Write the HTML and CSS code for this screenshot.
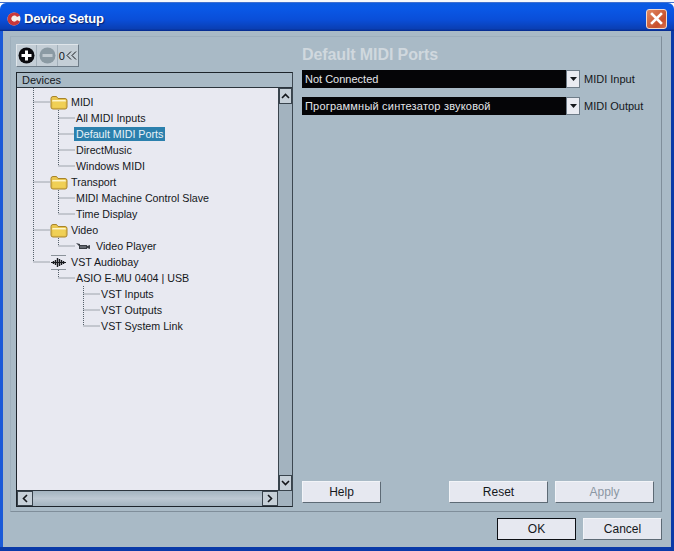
FILE: index.html
```html
<!DOCTYPE html>
<html lang="en">
<head>
<meta charset="utf-8">
<title>Device Setup</title>
<link rel="stylesheet" href="styles.css">
</head>
<body>
<div class="window">
  <div class="desktop-strip"></div>
  <header class="titlebar">
    <svg class="app-icon" width="15" height="16" viewBox="0 0 15 16"><circle cx="8" cy="8" r="6.5" fill="#f4efe9"/><path d="M8 1.500a6.500 6.500 0 1 0 6 9l-3-1.500a3 3 0 1 1 0-3l3-1.500a6.500 6.500 0 0 0-6-3z" fill="#c8373a"/><circle cx="8" cy="8" r="2.400" fill="#f4efe9"/></svg>
    <span class="title-text">Device Setup</span>
    <button class="close-btn"><svg width="13" height="13" viewBox="0 0 13 13"><path d="M2 2l9 9M11 2l-9 9" stroke="#fff" stroke-width="2.600" stroke-linecap="square"/></svg></button>
  </header>
  <div class="client">
    <div class="frame">
      <aside class="left">
        <div class="toolbar">
          <div class="tool"><svg width="17" height="17" viewBox="0 0 17 17"><circle cx="8.500" cy="8.500" r="8" fill="#0a0a0e"/><path d="M8.500 3.500v10M3.500 8.500h10" stroke="#fff" stroke-width="3"/></svg></div>
          <div class="tool"><svg width="17" height="17" viewBox="0 0 17 17"><circle cx="8.500" cy="8.500" r="8" fill="#8b9aa3"/><path d="M3.500 8.500h10" stroke="#c0c9cf" stroke-width="3"/></svg></div>
          <div class="tool tool-text">0<svg class="chevrons" width="11" height="9" viewBox="0 0 11 9"><path d="M5 .5L1 4.500 5 8.500M10 .5L6 4.500l4 4" fill="none" stroke="#14171b"/></svg></div>
        </div>
        <div class="devices">
          <div class="devices-head">Devices</div>
          <div class="devices-body">
            <div class="tree">
              <svg class="guides" width="261" height="403" viewBox="0 0 261 403"><path d="M16.500 0V174M16.500 14H33M16.500 94H33M16.500 142H33M16.500 174H33M41.500 22V78M41.500 30H58M41.500 46H58M41.500 62H58M41.500 78H58M41.500 102V126M41.500 110H58M41.500 126H58M41.500 150V158M41.500 158H58M41.500 182V190M41.500 190H58M66.500 198V238M66.500 206H83M66.500 222H83M66.500 238H83" fill="none" stroke="#55606a" stroke-dasharray="1 1"/></svg>
              <div class="row l0"><svg class="folder" width="18" height="15" viewBox="0 0 18 15"><use href="#folder-shape"/></svg><span>MIDI</span></div>
              <div class="row l1"><span>All MIDI Inputs</span></div>
              <div class="row l1"><span class="selected">Default MIDI Ports</span></div>
              <div class="row l1"><span>DirectMusic</span></div>
              <div class="row l1"><span>Windows MIDI</span></div>
              <div class="row l0"><svg class="folder" width="18" height="15" viewBox="0 0 18 15"><use href="#folder-shape"/></svg><span>Transport</span></div>
              <div class="row l1"><span>MIDI Machine Control Slave</span></div>
              <div class="row l1"><span>Time Display</span></div>
              <div class="row l0"><svg class="folder" width="18" height="15" viewBox="0 0 18 15"><use href="#folder-shape"/></svg><span>Video</span></div>
              <div class="row l1"><svg class="row-icon" width="15" height="9" viewBox="0 0 15 9"><path d="M0 1l4 1v1h7v1l3-1v4l-3-1v1H3V4z" fill="#3a3e44"/><path d="M4.500 5h1M6.500 5h1M8.500 5h1" stroke="#e8e9f1"/></svg><span>Video Player</span></div>
              <div class="row l0"><svg class="row-icon" width="15" height="15" viewBox="0 0 15 15"><path d="M0 .5h15M0 14.500h15" stroke="#8a929a"/><path d="M0 7.500h15" stroke="#17191d"/><path d="M2.500 6v3M4.500 5v5M6.500 3v9M8.500 4v7M10.500 5v5M12.500 6v3" stroke="#17191d" stroke-width="1.400"/></svg><span>VST Audiobay</span></div>
              <div class="row l1"><span>ASIO E-MU 0404 | USB</span></div>
              <div class="row l2"><span>VST Inputs</span></div>
              <div class="row l2"><span>VST Outputs</span></div>
              <div class="row l2"><span>VST System Link</span></div>
            </div>
            <div class="vscroll">
              <div class="sb-btn"><svg width="9" height="6" viewBox="0 0 9 6"><path d="M1 5l3.500-3.500L8 5" fill="none" stroke="#14171b" stroke-width="1.600"/></svg></div>
              <div class="sb-track"></div>
              <div class="sb-btn"><svg width="9" height="6" viewBox="0 0 9 6"><path d="M1 1l3.500 3.500L8 1" fill="none" stroke="#14171b" stroke-width="1.600"/></svg></div>
            </div>
            <div class="hscroll">
              <div class="sb-btn"><svg width="6" height="9" viewBox="0 0 6 9"><path d="M5 1L1.500 4.500 5 8" fill="none" stroke="#14171b" stroke-width="1.600"/></svg></div>
              <div class="sb-track"></div>
              <div class="sb-btn"><svg width="6" height="9" viewBox="0 0 6 9"><path d="M1 1l3.500 3.500L1 8" fill="none" stroke="#14171b" stroke-width="1.600"/></svg></div>
            </div>
          </div>
        </div>
      </aside>
      <main class="right">
        <h1 class="panel-title">Default MIDI Ports</h1>
        <div class="port-row">
          <div class="select"><span class="select-value">Not Connected</span><span class="select-btn"><svg width="7" height="4" viewBox="0 0 7 4"><path d="M0 0h7L3.500 4z" fill="#14171b"/></svg></span></div>
          <label class="port-label">MIDI Input</label>
        </div>
        <div class="port-row">
          <div class="select"><span class="select-value cyrillic">Программный синтезатор звуковой</span><span class="select-btn"><svg width="7" height="4" viewBox="0 0 7 4"><path d="M0 0h7L3.500 4z" fill="#14171b"/></svg></span></div>
          <label class="port-label">MIDI Output</label>
        </div>
        <div class="panel-actions">
          <button class="btn">Help</button>
          <div class="action-pair">
            <button class="btn">Reset</button>
            <button class="btn disabled">Apply</button>
          </div>
        </div>
      </main>
    </div>
    <footer class="footer">
      <button class="btn default">OK</button>
      <button class="btn">Cancel</button>
    </footer>
  </div>
</div>
<svg class="defs" width="0" height="0"><defs>
  <g id="folder-shape">
    <path d="M1 3.500Q1 1.500 3 1.500h3.500l1.500 2h7q2 0 2 2V12q0 2-2 2H3q-2 0-2-2z" fill="#e9c64f" stroke="#a8842a"/>
    <path d="M2.500 5h13l.5 1.500H2z" fill="#fff6c8"/>
    <path d="M3 7h12v5.500H3z" fill="#f0d055"/>
  </g>
</defs></svg>
</body>
</html>
```
FILE: styles.css
```css
* { box-sizing: border-box; }
html, body { margin: 0; padding: 0; }
body { width: 674px; height: 551px; overflow: hidden; font-family: "Liberation Sans", Arial, sans-serif; font-size: 11px; color: #14171b; background: #fff; }
.defs { display: block; }
.window { width: 674px; height: 551px; display: flex; flex-direction: column; }
.desktop-strip { height: 3px; flex: none; background: #f6f8fb; border-bottom: 1px solid #3f6fd0; }
.titlebar { height: 28px; flex: none; display: flex; align-items: center; padding: 3px 7px 0 6px; background: linear-gradient(#0b5be0, #0a58e6 20%, #0a4ed8 60%, #0a3fb4 92%, #062a8a); border-radius: 6px 6px 0 0; }
.app-icon { flex: none; margin-right: 3px; }
.title-text { flex: 1; color: #fff; font-size: 13px; font-weight: 700; letter-spacing: -.15px; text-shadow: 1px 1px 1px #06206c; }
.close-btn { width: 21px; height: 20px; padding: 0; border: 1px solid #f0d8cc; border-radius: 3px; background: linear-gradient(135deg, #e08a62, #c84f2c 70%, #d8704c); display: flex; align-items: center; justify-content: center; }
.client { flex: 1; display: flex; flex-direction: column; min-height: 0; padding: 5px 12px 7px 10px; border-bottom: 4px solid #0a3aa8; background: linear-gradient(90deg, #1a5ad8 3px, #a9bac6 3px, #a9bac6 671px, #0a3aa8 671px); }
.frame { height: 476px; flex: none; display: flex; padding: 7px 0 0 5px; border: 1px solid #8d9daa; border-color: #9eafbc #7f8e9a #7f8e9a #9eafbc; }
.left { width: 286px; flex: none; display: flex; flex-direction: column; }
.toolbar { width: 63px; height: 23px; display: flex; background: #c4ced6; border: 1px solid #dfe5ea; border-right-color: #6e7c88; border-bottom-color: #6e7c88; }
.tool { width: 21px; display: flex; align-items: center; justify-content: center; border-right: 1px solid #a3b0ba; }
.tool:last-child { border-right: 0; }
.tool-text { font-size: 11px; }
.chevrons { margin-left: 1px; }
.devices { margin-top: 5px; width: 277px; height: 435px; display: flex; flex-direction: column; border: 1px solid #1d242b; border-right-color: #3d4851; background: #a3b3bf; }
.devices-head { height: 15px; flex: none; padding-left: 5px; line-height: 15px; background: #a9bac6; border-bottom: 1px solid #2b343c; }
.devices-body { flex: 1; display: grid; grid-template-columns: 261px 14px; grid-template-rows: 403px 15px; }
.tree { position: relative; background: #e8e9f1; border-bottom: 1px solid #2b343c; padding-top: 6px; overflow: hidden; font-size: 10.7px; }
.guides { position: absolute; left: 0; top: 0; }
.row { position: relative; height: 16px; display: flex; align-items: center; white-space: nowrap; }
.row.l0 { padding-left: 33px; }
.row.l1 { padding-left: 59px; }
.row.l2 { padding-left: 84px; }
.folder { flex: none; margin-right: 3px; }
.row-icon { flex: none; margin-right: 5px; }
.row.l0 .row-icon { margin: 0 5px 0 1px; }
.selected { margin-left: -2px; padding: 0 2px; height: 14px; line-height: 14px; background: #2b80ad; color: #e8f2f8; }
.sb-btn { display: flex; align-items: center; justify-content: center; flex: none; background: #c6d0d8; border: 1px solid #39444d; }
.sb-track { flex: 1; }
.vscroll { display: flex; flex-direction: column; border-left: 1px solid #39444d; background: #a3b3bf; }
.vscroll .sb-btn { height: 16px; }
.hscroll { display: flex; background: linear-gradient(#a3b3bf, #bcc8d2 50%, #a3b3bf); }
.hscroll .sb-btn { width: 16px; }
.right { flex: 1; min-width: 0; display: flex; flex-direction: column; padding-right: 7px; }
.panel-title { margin: 1px 0 5px; height: 20px; line-height: 20px; font-size: 16px; font-weight: 700; letter-spacing: -.1px; color: #d0d8de; }
.port-row { display: flex; align-items: center; height: 18px; margin-bottom: 9px; white-space: nowrap; }
.select { width: 278px; height: 18px; flex: none; display: flex; background: #050507; color: #e4e6ea; }
.select-value { flex: 1; padding-left: 3px; line-height: 19px; }
.select-value.cyrillic { letter-spacing: .2px; }
.select-btn { width: 14px; flex: none; display: flex; align-items: center; justify-content: center; background: #e9ebf1; border: 1px solid #6e7c88; }
.port-label { margin-left: 4px; }
.panel-actions { margin-top: auto; margin-bottom: 8px; display: flex; justify-content: space-between; }
.action-pair { display: flex; gap: 7px; }
.btn { width: 79px; height: 22px; padding: 0; font: 12px "Liberation Sans", Arial, sans-serif; color: #14171b; background: #e6e8f0; border: 1px solid #f2f4f8; border-right-color: #5d6a75; border-bottom-color: #5d6a75; }
.action-pair .btn { width: 99px; }
.btn.disabled { color: #8b97a3; }
.btn.default { border: 1px solid #0c0f14; }
.footer { margin-top: auto; display: flex; justify-content: flex-end; gap: 7px; }
```
